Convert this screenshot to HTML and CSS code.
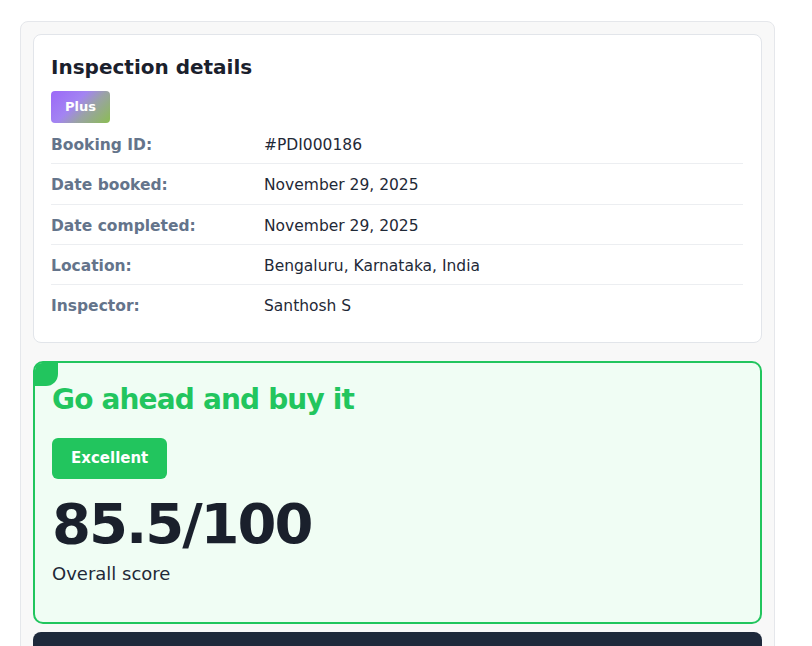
FILE: index.html
```html
<!DOCTYPE html>
<html>
<head>
<meta charset="utf-8">
<link rel="stylesheet" href="styles.css">
</head>
<body>
<div class="shell">
  <section class="card details">
    <h2 class="title">Inspection details</h2>
    <span class="plan">Plus</span>
    <div class="rows">
      <div class="row"><span class="label">Booking ID:</span><span class="value">#PDI000186</span></div>
      <div class="row"><span class="label">Date booked:</span><span class="value">November 29, 2025</span></div>
      <div class="row"><span class="label">Date completed:</span><span class="value">November 29, 2025</span></div>
      <div class="row"><span class="label">Location:</span><span class="value">Bengaluru, Karnataka, India</span></div>
      <div class="row"><span class="label">Inspector:</span><span class="value">Santhosh S</span></div>
    </div>
  </section>
  <section class="verdict">
    <span class="corner"></span>
    <h2 class="verdict-title">Go ahead and buy it</h2>
    <span class="rating">Excellent</span>
    <div class="score">85.5/100</div>
    <div class="score-label">Overall score</div>
  </section>
  <section class="dark-bar"></section>
</div>
</body>
</html>
```
FILE: styles.css
```css
* { box-sizing: border-box; }
html, body { margin: 0; padding: 0; background: #ffffff; }
body {
  font-family: "DejaVu Sans", "Liberation Sans", sans-serif;
  padding: 21px 0 0 20px;
  overflow: hidden;
}
.shell {
  width: 755px;
  background: #f8f8f8;
  border: 1px solid #e5e7eb;
  border-radius: 8px;
  padding: 12px 12px 40px;
}
.card {
  background: #ffffff;
  border: 1px solid #e2e5ea;
  border-radius: 8px;
  padding: 17px 18px 18px 17px;
}
.title {
  margin: 0 0 9px;
  font-size: 20px;
  line-height: 30px;
  font-weight: 700;
  color: #1a202c;
}
.plan {
  display: inline-block;
  height: 32px;
  line-height: 32px;
  padding: 0 14px;
  border-radius: 4px;
  font-size: 13px;
  font-weight: 700;
  color: #ffffff;
  background: linear-gradient(135deg, #9c68f8 0%, #a384f2 40%, #9aa2a6 62%, #8bbd52 100%);
}
.rows { margin-top: 1px; }
.row {
  display: grid;
  grid-template-columns: 213px 1fr;
  padding: 10px 0 7.3px;
  line-height: 22px;
  font-size: 15.5px;
  border-bottom: 1px solid #eceef1;
}
.row:last-child { border-bottom: none; }
.label { font-weight: 700; color: #64748b; }
.value { color: #1f2937; }

.verdict {
  position: relative;
  margin-top: 18px;
  background: #f0fdf4;
  border: 2px solid #22c55e;
  border-radius: 10px;
  padding: 17px 17px 35px;
}
.corner {
  position: absolute;
  top: 0;
  left: 0;
  width: 23px;
  height: 23px;
  background: #22c55e;
  border-bottom-right-radius: 12px;
  border-top-left-radius: 7px;
}
.verdict-title {
  margin: 0 0 19px;
  font-size: 28px;
  line-height: 39px;
  font-weight: 700;
  letter-spacing: -0.03em;
  color: #22c55e;
}
.rating {
  display: inline-block;
  padding: 10px 19px;
  line-height: 21px;
  border-radius: 6px;
  background: #22c55e;
  color: #ffffff;
  font-size: 15px;
  font-weight: 700;
}
.score {
  margin-top: 14px;
  font-size: 56px;
  line-height: 62px;
  font-weight: 700;
  letter-spacing: -2px;
  color: #1a202c;
}
.score-label {
  margin-top: 5px;
  font-size: 18px;
  line-height: 27px;
  color: #1f2937;
}
.dark-bar {
  margin-top: 8px;
  height: 80px;
  background: #1e293b;
  border-radius: 8px;
}
```
